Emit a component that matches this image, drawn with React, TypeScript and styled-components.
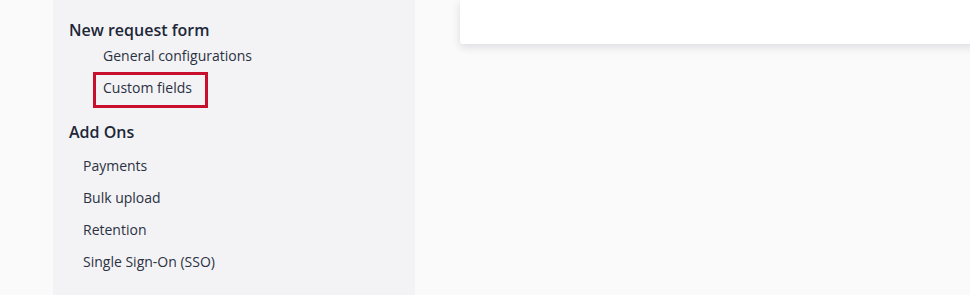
import React from 'react';
import styled, { createGlobalStyle } from 'styled-components';

const GlobalStyle = createGlobalStyle`
    html, body {
        margin: 0;
        padding: 0;
        height: 100%;
        background: #fafafa;
        font-family: 'Open Sans', 'Noto Sans', sans-serif;
        -webkit-font-smoothing: antialiased;
    }
    #root {
        height: 100%;
    }
`;

interface NavLink {
    label: string;
    highlighted?: boolean;
}

interface NavGroup {
    title: string;
    nested: boolean;
    links: NavLink[];
}

const groups: NavGroup[] = [
    {
        title: 'New request form',
        nested: true,
        links: [{ label: 'General configurations' }, { label: 'Custom fields', highlighted: true }],
    },
    {
        title: 'Add Ons',
        nested: false,
        links: [
            { label: 'Payments' },
            { label: 'Bulk upload' },
            { label: 'Retention' },
            { label: 'Single Sign-On (SSO)' },
        ],
    },
];

export default function App() {
    return (
        <>
            <GlobalStyle />
            <Page>
                <Gutter />
                <Sidebar>
                    {groups.map((group) => (
                        <Group key={group.title}>
                            <GroupTitle>{group.title}</GroupTitle>
                            <LinkList nested={group.nested}>
                                {group.links.map((link) => (
                                    <LinkItem key={link.label} highlighted={!!link.highlighted}>
                                        {link.label}
                                    </LinkItem>
                                ))}
                            </LinkList>
                        </Group>
                    ))}
                </Sidebar>
                <Main>
                    <Card />
                </Main>
            </Page>
        </>
    );
}

const Page = styled.div`
    display: flex;
    height: 295px;
    overflow: hidden;
`;

const Gutter = styled.div`
    width: 53px;
    flex-shrink: 0;
    background: #fafafa;
`;

const Sidebar = styled.nav`
    width: 362px;
    flex-shrink: 0;
    background: #f3f3f5;
    padding: 20px 0 0 16px;
    box-sizing: border-box;
    display: flex;
    flex-direction: column;
    gap: 18px;
`;

const Group = styled.section`
    display: flex;
    flex-direction: column;
`;

const GroupTitle = styled.h3`
    margin: 0;
    font-size: 16px;
    line-height: 20px;
    font-weight: 600;
    color: #1d2738;
`;

const LinkList = styled.ul<{ nested: boolean }>`
    list-style: none;
    margin: ${({ nested }) => (nested ? '0' : '8px 0 0')};
    padding: 0 0 0 ${({ nested }) => (nested ? '34px' : '14px')};
`;

const LinkItem = styled.li<{ highlighted: boolean }>`
    position: relative;
    height: 32px;
    line-height: 32px;
    font-size: 14px;
    color: #2a3142;
    white-space: nowrap;

    ${({ highlighted }) =>
        highlighted &&
        `
        &::after {
            content: '';
            position: absolute;
            left: -10px;
            top: 0;
            width: 115px;
            height: 36px;
            border: 3px solid #c8102e;
            box-sizing: border-box;
        }
    `}
`;

const Main = styled.main`
    flex: 1;
    padding-left: 45px;
    background: #fafafa;
`;

const Card = styled.div`
    height: 44px;
    margin-right: -10px;
    background: #ffffff;
    border-bottom-left-radius: 3px;
    box-shadow: 0 3px 8px rgba(40, 40, 70, 0.14);
`;
